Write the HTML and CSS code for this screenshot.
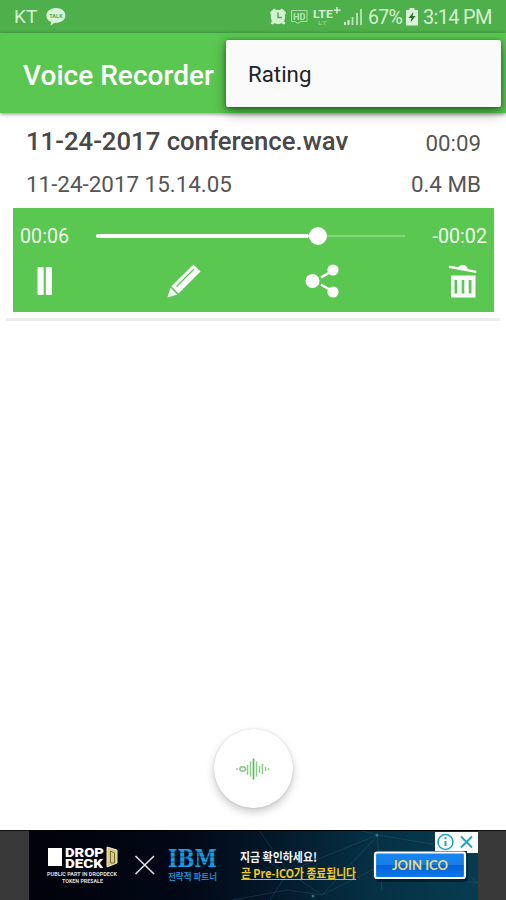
FILE: index.html
```html
<!DOCTYPE html>
<html lang="en">
<head>
<meta charset="utf-8">
<title>Voice Recorder</title>
<link rel="stylesheet" href="styles.css">
</head>
<body>
<div class="screen">
  <header class="status">
    <span class="carrier">KT</span>
    <svg class="talk" width="20" height="18" viewBox="0 0 20 18"><path d="M10 0C4.500 0 .4 3.200 .4 7.500c0 3 1.800 5.300 4.700 6.500L4.600 17.500l4.200-2.700C15 15 19.400 12 19.400 7.500S15.500 0 10 0z" fill="#d9f2d7"/><text x="3.200" y="9.800" textLength="13.500" lengthAdjust="spacingAndGlyphs" class="talk-text">TALK</text></svg>
    <svg class="indicators" width="94" height="26" viewBox="0 0 94 26">
      <g fill="#d5efd2"><circle cx="9" cy="17" r="7.200"/><path d="M1 12.500l4-4 3 2-6 5zM17 12.500l-4-4-3 2 6 5zM3 21l-1.500 2.500 2 1 3-2zM15 21l1.500 2.500-2 1-3-2z"/></g>
      <path d="M9 12.500V17.500h4" fill="none" stroke="#4faf4b" stroke-width="1.500"/>
      <path d="M22.500 10.500h15.500v11h-6l-3 2-3-2h-3.500z" fill="none" stroke="#a9dca6"/>
      <text x="24" y="20" textLength="12.500" lengthAdjust="spacingAndGlyphs" class="hd">HD</text>
      <text x="44" y="17.500" textLength="20" lengthAdjust="spacingAndGlyphs" class="lte">LTE</text>
      <path d="M68 7v6.500M65 10.200h6.500" stroke="#d5efd2" stroke-width="1.500"/>
      <text x="49" y="25" textLength="9" lengthAdjust="spacingAndGlyphs" class="lte-arrows">LT</text>
      <path d="M76 22v3M79.500 20v5" stroke="#d5efd2" stroke-width="2"/>
      <path d="M83.500 17v8M88 13v12M92 9v16" stroke="#bce4b9" stroke-width="1.800"/>
    </svg>
    <span class="percent">67%</span>
    <svg class="battery" width="12" height="18" viewBox="0 0 12 18"><path d="M3.500 0h5v2H12v15.500H0V2h3.500z" fill="#d9f2d7"/><path d="M7.500 4L2.500 10h3L4.500 14.500 9.500 8H6.600z" fill="#2f6b2c"/></svg>
    <span class="clock">3:14 PM</span>
  </header>
  <div class="appbar">
    <h1>Voice Recorder</h1>
    <div class="menu"><span>Rating</span></div>
  </div>
  <main>
    <article class="record">
      <div class="row title-row"><strong>11-24-2017 conference.wav</strong><span>00:09</span></div>
      <div class="row date-row"><span class="date">11-24-2017 15.14.05</span><span class="size">0.4 MB</span></div>
      <section class="player">
        <div class="seek">
          <span class="elapsed">00:06</span>
          <div class="track"><div class="played"></div><div class="thumb"></div><div class="rest"></div></div>
          <span class="remain">-00:02</span>
        </div>
        <div class="actions">
          <svg width="16" height="28" viewBox="0 0 16 28" fill="#fff"><rect x=".5" width="6.200" height="28" rx="1"/><rect x="8.800" width="6.200" height="28" rx="1"/></svg>
          <svg class="pencil" width="34" height="34" viewBox="0 0 34 34" fill="#fff"><path d="M26.500.5l7 7L11.500 29.500l-7.200-7.200z"/><path d="M3.500 23.800l6.700 6.600L.5 33.500z"/><path d="M9.500 22.500L27 5" stroke="#59c64f" stroke-width="1.300"/></svg>
          <svg class="share" width="34" height="34" viewBox="0 0 34 34" fill="#fff"><circle cx="7.500" cy="17" r="7"/><circle cx="28" cy="6" r="5.600"/><circle cx="28" cy="28" r="5.600"/><path d="M16 13.500L27 7M16 20.500L27 27" stroke="#fff" stroke-width="2.600"/></svg>
          <svg width="28" height="34" viewBox="0 0 28 34" fill="#fff"><path d="M.3 1.500l9.200 1.700C11-.3 18.500.2 18.500 5l9 1.800-.5 2.200L0 4z"/><path fill-rule="evenodd" d="M2 11.500h24.500V33.500H2zM5.500 16v13.500h2.700V16zm7.200 0v13.500h2.600V16zm7 0v13.500h2.800V16z"/></svg>
        </div>
      </section>
    </article>
    <button class="fab" aria-label="Record">
      <svg width="36" height="22" viewBox="0 0 36 22" fill="none" stroke="#59b955"><path d="M18.500 .5v21" stroke-width="1.700"/><path d="M15.500 3.500v15M21.500 3.500v15M12.500 7v10M24.500 8v7M27.500 6v10" stroke-width="1.500" opacity=".7"/><path d="M2 10v2M30.500 9v4M33.500 10v2" stroke-width="1.400" opacity=".65"/><ellipse cx="7.700" cy="11" rx="2.800" ry="2.300" stroke-width="1.500" opacity=".75"/></svg>
    </button>
  </main>
  <footer class="ad">
    <svg class="banner" width="449" height="70" viewBox="0 0 449 70">
      <defs>
        <linearGradient id="night"><stop offset="0" stop-color="#01020a"/><stop offset=".35" stop-color="#020817"/><stop offset=".55" stop-color="#04192a"/><stop offset=".75" stop-color="#062f43"/><stop offset="1" stop-color="#073c50"/></linearGradient>
        <linearGradient id="button" x2="0" y2="1"><stop offset="0" stop-color="#1687f1"/><stop offset=".48" stop-color="#167de9"/><stop offset=".5" stop-color="#0560dc"/><stop offset="1" stop-color="#087be9"/></linearGradient>
      </defs>
      <rect width="449" height="70" fill="url(#night)"/>
      <g fill="none" stroke="#2a6b80" stroke-width=".8" opacity=".4"><path d="M216 20l42 22 90-37 55 9M230 0l29 42 34 23 56-60-20-5M259 42l-18 28M293 65l54-27 102 15M348 5l5 55M403 14l46 39M293 65l-35-5-55 10"/></g>
      <g fill="#227a90"><circle cx="348" cy="5" r="1.500"/><circle cx="284" cy="66" r="1.500"/></g>
      <path d="M0 .5h449" stroke="#000"/>
      <rect x="19" y="18" width="14" height="18" fill="#fff"/>
      <text x="36" y="27" textLength="39" lengthAdjust="spacingAndGlyphs" class="drop">DROP</text>
      <text x="36" y="38" textLength="38" lengthAdjust="spacingAndGlyphs" class="drop">DECK</text>
      <path d="M78 17l10 3v13l-10 4z" fill="#d9cd85" stroke="#efe7b6"/><path d="M81.500 21v12h4v-10z" fill="none" stroke="#756b2d"/>
      <text x="18" y="45.500" textLength="70" lengthAdjust="spacingAndGlyphs" class="tiny">PUBLIC PART IN DROPDECK</text>
      <text x="33" y="52.500" textLength="41" lengthAdjust="spacingAndGlyphs" class="tiny">TOKEN PRESALE</text>
      <path d="M106.500 26l18.500 18M125 26l-18.500 18" stroke="#e2e2e2" stroke-width="1.600"/>
      <text x="139" y="37" textLength="49" lengthAdjust="spacingAndGlyphs" class="ibm">IBM</text>
      <path d="M139 22.300h49M139 27h49M139 32h49" stroke="#03101f" stroke-width=".5"/>
      <text x="139" y="50" textLength="49" lengthAdjust="spacingAndGlyphs" class="partner">전략적 파트너</text>
      <text x="211" y="31.500" textLength="77" lengthAdjust="spacingAndGlyphs" class="check">지금 확인하세요!</text>
      <text x="212" y="47.500" textLength="115" lengthAdjust="spacingAndGlyphs" class="presale">곧 Pre-ICO가 종료됩니다</text>
      <path d="M212 49.500h115" stroke="#d7b91d" stroke-width="1.200"/>
      <rect x="347" y="23" width="92" height="29" rx="3" fill="#00101b" opacity=".6"/>
      <rect x="346" y="22.500" width="90" height="25.500" rx="2" fill="url(#button)" stroke="#fff" stroke-width="2.200"/>
      <text x="363" y="39.500" textLength="56" lengthAdjust="spacingAndGlyphs" class="join">JOIN ICO</text>
      <path d="M406 2h43v21h-11v-2h-32z" fill="#fff"/>
      <g fill="none" stroke="#1ca6c6" stroke-width="1.600"><circle cx="416.500" cy="12" r="7.500"/><path d="M432 6.500l11 11M443 6.500l-11 11" stroke-width="1.900"/><path d="M416.500 11v5M416.500 7v2" stroke-width="2"/></g>
    </svg>
  </footer>
</div>
</body>
</html>
```
FILE: styles.css
```css
* { box-sizing: border-box; }
body { margin: 0; font-family: Roboto, "Noto Sans CJK KR", sans-serif; background: #fff; }
svg { display: block; flex: none; }
.screen { width: 506px; height: 900px; display: flex; flex-direction: column; overflow: hidden; }
.status { height: 33px; flex: none; display: flex; align-items: flex-start; padding-left: 14px; background: #4eb04b; color: #d5efd2; white-space: nowrap; }
.carrier { width: 32px; font-size: 19px; line-height: 34px; }
.talk { margin-top: 8px; }
.talk-text { font: 700 6px Roboto, sans-serif; fill: #58a954; }
.indicators { margin-left: 203px; }
.hd { font: 700 9px Roboto, sans-serif; fill: #b9e3b6; }
.lte { font: 700 11px Roboto, sans-serif; fill: #d5efd2; }
.lte-arrows { font: 700 5px Roboto, sans-serif; fill: #83c980; }
.percent { width: 38px; margin-left: 5px; font-size: 19.500px; line-height: 36px; letter-spacing: -.7px; }
.battery { margin-top: 8px; }
.clock { margin-left: 5px; font-size: 20px; line-height: 35px; letter-spacing: -.7px; }
.appbar { position: relative; z-index: 1; height: 80px; flex: none; display: flex; align-items: center; padding-left: 23px; background: #5ac750; box-shadow: 0 1px 4px rgba(0,0,0,.45); }
h1 { margin: 0; padding-top: 5px; font-size: 28px; font-weight: 500; line-height: 36px; letter-spacing: .03px; color: #fff; white-space: nowrap; }
.menu { position: absolute; top: 7px; right: 5px; width: 275px; height: 67px; display: flex; align-items: center; padding: 0 0 0 22px; background: #fafafa; border-radius: 2px; color: #222; font-size: 22.300px; box-shadow: 0 1px 5px rgba(0,60,0,.6), 0 6px 14px rgba(0,0,0,.35); }
main { flex: 1; display: flex; flex-direction: column; align-items: center; justify-content: space-between; padding: 0 6px 22px; }
.record { width: 494px; height: 208px; padding: 0 6px 0 7px; border-bottom: 3px solid #ededef; }
.row { display: flex; justify-content: space-between; padding: 0 13px; color: #555; white-space: nowrap; }
.title-row { height: 52px; padding-top: 10px; font-size: 22.300px; line-height: 41px; }
.title-row strong { font-size: 25.700px; font-weight: 500; line-height: 37px; color: #484848; }
.date-row { height: 43px; font-size: 22.400px; line-height: 39px; }
.player { height: 104px; background: #5ac750; color: #f1fcef; }
.seek { display: flex; align-items: center; height: 56px; padding: 0 7px; font-size: 19.700px; }
.elapsed { width: 76px; }
.remain { flex: 1; text-align: right; }
.track { width: 309px; display: flex; align-items: center; }
.played { width: 213px; height: 4px; background: #fff; border-radius: 2px; }
.thumb { width: 18px; height: 18px; background: #fff; border-radius: 50%; }
.rest { width: 78px; height: 2px; background: #84d47c; }
.actions { display: flex; justify-content: space-between; align-items: center; height: 34px; padding: 0 17px 0 24px; }
.pencil { margin: 0 -5px 0 5px; }
.share { margin: 0 1px 0 -1px; }
.fab { width: 79px; height: 79px; padding: 0; border: 0; border-radius: 50%; background: #fff; display: grid; place-items: center; box-shadow: 0 4px 8px rgba(0,0,0,.22), 0 0 2px rgba(0,0,0,.14); }
.ad { height: 70px; flex: none; display: flex; justify-content: center; background: #393939; border-top: 1px solid #111; }
.banner { margin-top: -1px; }
.drop { font: 900 12px Roboto, sans-serif; fill: #fff; }
.tiny { font: 700 5.500px Roboto, sans-serif; fill: #ddd; }
.ibm { font: 700 24px "DejaVu Serif", serif; fill: #159ee3; }
.partner { font: 700 9.500px "Noto Sans CJK KR", sans-serif; fill: #168bd0; }
.check { font: 700 12.500px "Noto Sans CJK KR", sans-serif; fill: #f5f5f5; }
.presale { font: 700 12px "Noto Sans CJK KR", sans-serif; fill: #f0cb20; }
.join { font: 700 12.500px Lato, sans-serif; fill: #eadb6c; }
```
